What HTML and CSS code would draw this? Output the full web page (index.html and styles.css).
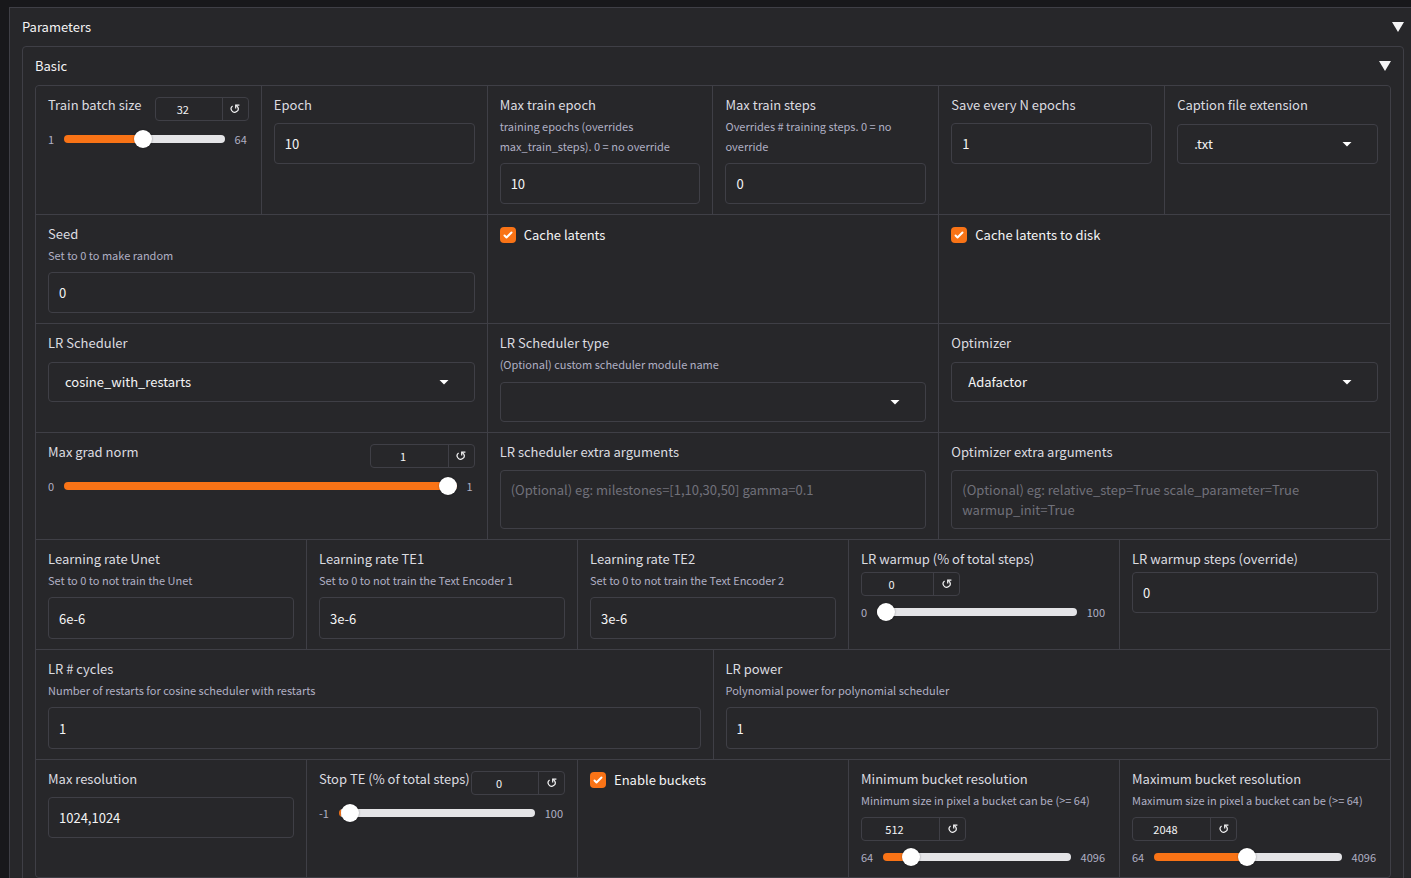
FILE: index.html
```html
<!DOCTYPE html>
<html lang="en">

<head>
  <meta charset="UTF-8">
  <meta name="viewport" content="width=device-width, initial-scale=1.0">
  <title>Training Parameters</title>
  <link rel="stylesheet" href="styles.css">
</head>

<body>

  <!-- Icons shared by the sliders and panel headers -->
  <svg class="sprite" aria-hidden="true">
    <symbol id="reset" viewBox="0 0 10 10">
      <path d="M2.6 1.9A3.5 3.5 0 1 0 7.6 2.8L6 1.4" fill="none" stroke="currentColor" stroke-width="1.2" />
      <path d="M9.4 1.1H5.7V4.6" fill="none" stroke="currentColor" stroke-width="1.2" />
    </symbol>
    <symbol id="arrow" viewBox="0 0 12 10">
      <path d="M0 0H12L6 10Z" fill="currentColor" />
    </symbol>
  </svg>

  <section class="panel panel-outer">
    <button class="panel-toggle" type="button">Parameters <svg class="arrow"><use href="#arrow" /></svg></button>

    <section class="panel">
      <button class="panel-toggle" type="button">Basic <svg class="arrow"><use href="#arrow" /></svg></button>

      <form class="group">

        <!-- Batch size and epochs -->
        <div class="row cols-6">
          <div class="cell">
            <div class="slider-head">
              <label for="batch">Train batch size</label>
              <div class="number number-narrow">
                <input type="number" value="32" aria-label="Train batch size value">
                <button type="button" aria-label="Reset"><svg><use href="#reset" /></svg></button>
              </div>
            </div>
            <div class="slider">
              <span>1</span>
              <input type="range" id="batch" min="1" max="64" value="32" style="background-size: 49% 100%">
              <span class="max">64</span>
            </div>
          </div>
          <div class="cell">
            <label for="epoch">Epoch</label>
            <input class="field" type="text" id="epoch" value="10">
          </div>
          <div class="cell">
            <label for="max-epoch">Max train epoch</label>
            <p class="info">training epochs (overrides max_train_steps). 0 = no override</p>
            <input class="field" type="text" id="max-epoch" value="10">
          </div>
          <div class="cell">
            <label for="max-steps">Max train steps</label>
            <p class="info">Overrides # training steps. 0 = no override</p>
            <input class="field" type="text" id="max-steps" value="0">
          </div>
          <div class="cell">
            <label for="save-every">Save every N epochs</label>
            <input class="field" type="text" id="save-every" value="1">
          </div>
          <div class="cell">
            <label for="caption">Caption file extension</label>
            <select id="caption"><option>.txt</option></select>
          </div>
        </div>

        <!-- Seed and cache -->
        <div class="row cols-3">
          <div class="cell">
            <label for="seed">Seed</label>
            <p class="info">Set to 0 to make random</p>
            <input class="field" type="text" id="seed" value="0">
          </div>
          <div class="cell">
            <label class="check"><input type="checkbox" checked> Cache latents</label>
          </div>
          <div class="cell">
            <label class="check"><input type="checkbox" checked> Cache latents to disk</label>
          </div>
        </div>

        <!-- Scheduler and optimizer -->
        <div class="row cols-3">
          <div class="cell">
            <label for="scheduler">LR Scheduler</label>
            <select id="scheduler"><option>cosine_with_restarts</option></select>
          </div>
          <div class="cell">
            <label for="scheduler-type">LR Scheduler type</label>
            <p class="info">(Optional) custom scheduler module name</p>
            <select id="scheduler-type"><option></option></select>
          </div>
          <div class="cell">
            <label for="optimizer">Optimizer</label>
            <select id="optimizer"><option>Adafactor</option></select>
          </div>
        </div>

        <div class="row cols-3">
          <div class="cell">
            <div class="slider-head">
              <label for="grad-norm">Max grad norm</label>
              <div class="number">
                <input type="number" value="1" aria-label="Max grad norm value">
                <button type="button" aria-label="Reset"><svg><use href="#reset" /></svg></button>
              </div>
            </div>
            <div class="slider">
              <span>0</span>
              <input type="range" id="grad-norm" min="0" max="1" value="1" style="background-size: 100% 100%">
              <span class="max">1</span>
            </div>
          </div>
          <div class="cell">
            <label for="scheduler-args">LR scheduler extra arguments</label>
            <textarea id="scheduler-args" placeholder="(Optional) eg: milestones=[1,10,30,50] gamma=0.1"></textarea>
          </div>
          <div class="cell">
            <label for="optimizer-args">Optimizer extra arguments</label>
            <textarea id="optimizer-args" placeholder="(Optional) eg: relative_step=True scale_parameter=True warmup_init=True"></textarea>
          </div>
        </div>

        <!-- Learning rates -->
        <div class="row cols-5 row-lr">
          <div class="cell">
            <label for="lr-unet">Learning rate Unet</label>
            <p class="info">Set to 0 to not train the Unet</p>
            <input class="field" type="text" id="lr-unet" value="6e-6">
          </div>
          <div class="cell">
            <label for="lr-te1">Learning rate TE1</label>
            <p class="info">Set to 0 to not train the Text Encoder 1</p>
            <input class="field" type="text" id="lr-te1" value="3e-6">
          </div>
          <div class="cell">
            <label for="lr-te2">Learning rate TE2</label>
            <p class="info">Set to 0 to not train the Text Encoder 2</p>
            <input class="field" type="text" id="lr-te2" value="3e-6">
          </div>
          <div class="cell tight">
            <label for="warmup">LR warmup (% of total steps)</label>
            <div class="number number-mid">
              <input type="number" value="0" aria-label="LR warmup value">
              <button type="button" aria-label="Reset"><svg><use href="#reset" /></svg></button>
            </div>
            <div class="slider">
              <span>0</span>
              <input type="range" id="warmup" min="0" max="100" value="0" style="background-size: 0% 100%">
              <span class="max">100</span>
            </div>
          </div>
          <div class="cell tight">
            <label for="warmup-steps">LR warmup steps (override)</label>
            <input class="field" type="text" id="warmup-steps" value="0">
          </div>
        </div>

        <div class="row cols-2 row-lr">
          <div class="cell">
            <label for="cycles">LR # cycles</label>
            <p class="info">Number of restarts for cosine scheduler with restarts</p>
            <input class="field" type="text" id="cycles" value="1">
          </div>
          <div class="cell">
            <label for="power">LR power</label>
            <p class="info">Polynomial power for polynomial scheduler</p>
            <input class="field" type="text" id="power" value="1">
          </div>
        </div>

        <!-- Resolution and buckets -->
        <div class="row cols-5">
          <div class="cell">
            <label for="resolution">Max resolution</label>
            <input class="field" type="text" id="resolution" value="1024,1024">
          </div>
          <div class="cell">
            <div class="slider-head">
              <label for="stop-te">Stop TE (% of total steps)</label>
              <div class="number number-narrow">
                <input type="number" value="0" aria-label="Stop TE value">
                <button type="button" aria-label="Reset"><svg><use href="#reset" /></svg></button>
              </div>
            </div>
            <div class="slider">
              <span>-1</span>
              <input type="range" id="stop-te" min="-1" max="100" value="0" style="background-size: 1% 100%">
              <span class="max">100</span>
            </div>
          </div>
          <div class="cell">
            <label class="check"><input type="checkbox" checked> Enable buckets</label>
          </div>
          <div class="cell">
            <label for="min-bucket">Minimum bucket resolution</label>
            <p class="info">Minimum size in pixel a bucket can be (&gt;= 64)</p>
            <div class="number">
              <input type="number" value="512" aria-label="Minimum bucket resolution value">
              <button type="button" aria-label="Reset"><svg><use href="#reset" /></svg></button>
            </div>
            <div class="slider">
              <span>64</span>
              <input type="range" id="min-bucket" min="64" max="4096" value="512" style="background-size: 11% 100%">
              <span class="max">4096</span>
            </div>
          </div>
          <div class="cell">
            <label for="max-bucket">Maximum bucket resolution</label>
            <p class="info">Maximum size in pixel a bucket can be (&gt;= 64)</p>
            <div class="number">
              <input type="number" value="2048" aria-label="Maximum bucket resolution value">
              <button type="button" aria-label="Reset"><svg><use href="#reset" /></svg></button>
            </div>
            <div class="slider">
              <span>64</span>
              <input type="range" id="max-bucket" min="64" max="4096" value="2048" style="background-size: 49% 100%">
              <span class="max">4096</span>
            </div>
          </div>
        </div>

      </form>
    </section>
  </section>

</body>

</html>
```
FILE: styles.css
```css
/* Reset styles */
* {
  margin: 0;
  padding: 0;
  box-sizing: border-box;
}

body {
  padding: 7px 0 0 9px;
  background: #18181b;
  color: #f4f4f5;
  font-family: "Noto Sans CJK SC", "Open Sans", sans-serif;
  font-size: 13px;
  line-height: 20px;
  overflow: hidden;
}

input,
select,
textarea,
button {
  font: inherit;
  color: inherit;
  background: none;
  border: none;
}

.sprite {
  display: none;
}

/* Accordion panels */
.panel {
  padding: 0 12px 12px;
  border: 1px solid #3f3f46;
  border-radius: 4px;
  background: #27272a;
}

/* The outer panel runs past the window edge */
.panel-outer {
  margin-right: -6px;
  border-radius: 0;
}

.panel-toggle {
  display: flex;
  justify-content: space-between;
  align-items: center;
  width: 100%;
  height: 38px;
  cursor: pointer;
}

.arrow {
  width: 12px;
  height: 10px;
}

/* Grid of form cells, the gaps draw the lines */
.group {
  border: 1px solid #3f3f46;
  border-radius: 4px;
  background: #3f3f46;
  overflow: hidden;
  display: grid;
  gap: 1px;
}

.row {
  display: grid;
  gap: 1px;
}

.row-lr {
  min-height: 109px;
}

.cols-2 {
  grid-template-columns: repeat(2, minmax(0, 1fr));
}

.cols-3 {
  grid-template-columns: repeat(3, minmax(0, 1fr));
}

.cols-5 {
  grid-template-columns: repeat(5, minmax(0, 1fr));
}

.cols-6 {
  grid-template-columns: repeat(6, minmax(0, 1fr));
}

.cell {
  padding: 9px 12px 10px;
  background: #27272a;
}

label {
  display: block;
  height: 21px;
  color: #dcdce0;
  white-space: nowrap;
}

.info {
  color: #b0b0c4;
  font-size: 11px;
}

/* Text fields */
.field,
select,
textarea {
  display: block;
  width: 100%;
  margin-top: 7px;
  border: 1px solid #3f3f46;
  border-radius: 4px;
}

.field {
  height: 41px;
  padding: 0 10px;
}

.row-lr .field {
  height: 42px;
}

textarea {
  height: 59px;
  padding: 9px 10px;
  resize: none;
}

textarea::placeholder {
  color: #71717a;
}

select {
  height: 40px;
  margin-top: 8px;
  padding: 0 40px 0 16px;
  appearance: none;
  background: url("data:image/svg+xml,%3Csvg xmlns='http://www.w3.org/2000/svg' width='10' height='5'%3E%3Cpath d='M0.5 0H9.5L5 4.5Z' fill='white'/%3E%3C/svg%3E") no-repeat right 25px center;
}

/* Check boxes */
.check {
  display: flex;
  align-items: center;
  gap: 8px;
  height: 22px;
  color: #f4f4f5;
}

.check input {
  appearance: none;
  width: 16px;
  height: 16px;
  border-radius: 4px;
  background: #f97316 url("data:image/svg+xml,%3Csvg viewBox='0 0 16 16' fill='white' xmlns='http://www.w3.org/2000/svg'%3E%3Cpath d='M12.207 4.793a1 1 0 010 1.414l-5 5a1 1 0 01-1.414 0l-2-2a1 1 0 011.414-1.414L6.5 9.086l4.293-4.293a1 1 0 011.414 0z'/%3E%3C/svg%3E") center / 100%;
}

/* Number box with reset button */
.slider-head {
  display: flex;
  justify-content: space-between;
  height: 27px;
}

.number {
  display: flex;
  flex-shrink: 0;
  width: 105px;
  height: 24px;
  margin-top: 7px;
  border: 1px solid #3f3f46;
  border-radius: 4px;
  font-size: 11px;
}

.number-narrow {
  width: 94px;
}

.number-mid {
  width: 99px;
}

.slider-head .number {
  margin-top: 2px;
}

.number input {
  flex: 1;
  min-width: 0;
  padding-right: 12px;
  text-align: center;
  appearance: textfield;
}

.number input::-webkit-inner-spin-button {
  display: none;
}

.number button {
  display: flex;
  align-items: center;
  justify-content: center;
  width: 26px;
  border-left: 1px solid #3f3f46;
}

.number svg {
  width: 10px;
  height: 10px;
}

/* Sliders */
.slider {
  display: flex;
  align-items: center;
  gap: 10px;
  margin-top: 6px;
  color: #b0b0c4;
  font-size: 11px;
}

.slider-head + .slider {
  margin-top: 7px;
}

.slider .max {
  padding-right: 2px;
}

.slider input {
  flex: 1;
  min-width: 0;
  height: 8px;
  border-radius: 8px;
  appearance: none;
  background: #e4e4e7 linear-gradient(#f97316, #f97316) no-repeat;
}

.slider input::-webkit-slider-thumb {
  appearance: none;
  width: 18px;
  height: 18px;
  border-radius: 50%;
  background: #fff;
  box-shadow: 0 0 2px rgba(0, 0, 0, 0.4);
}

.tight .number {
  margin-top: 2px;
}

.tight .field {
  height: 41px;
  margin-top: 2px;
}
```
